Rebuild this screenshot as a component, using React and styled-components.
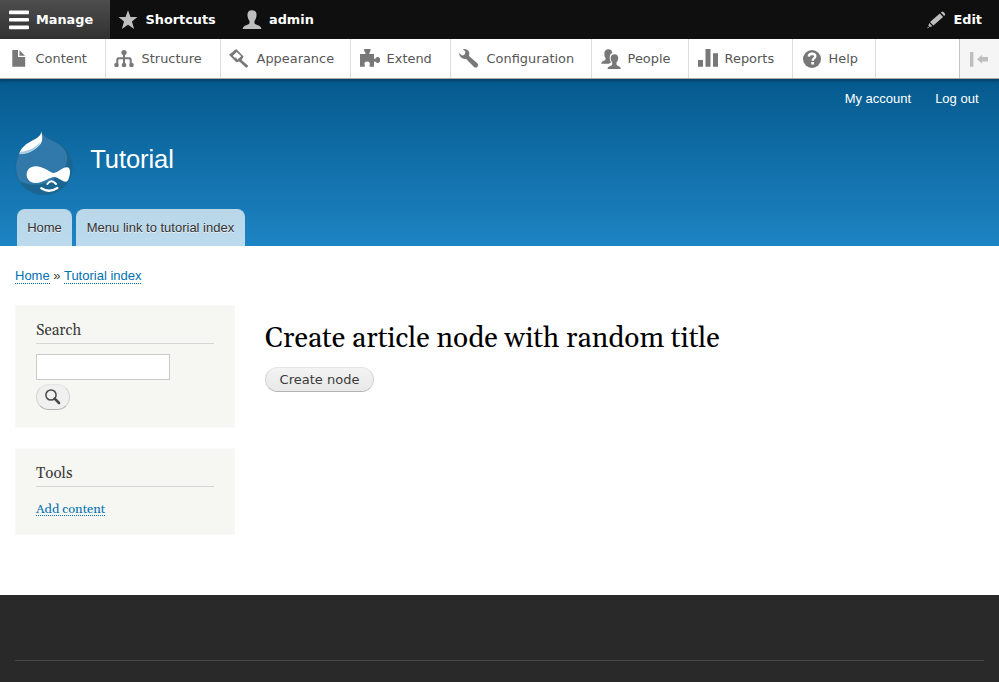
import React from "react";
import styled, { createGlobalStyle, css } from "styled-components";

const sans = css`font-family: "Liberation Sans", Arial, sans-serif;`;
const dejavu = css`font-family: "DejaVu Sans", Verdana, sans-serif;`;
const serif = css`font-family: Georgia, Gelasio, "Liberation Serif", serif;`;

const Global = createGlobalStyle`
  * { box-sizing: border-box; }
  html, body { margin: 0; background: #fff; overflow: hidden; }
  a { text-decoration: none; color: inherit; }
`;

const Page = styled.div`
  ${sans}
  width: 999px;
  height: 682px;
  display: flex;
  flex-direction: column;
  font-size: 13px;
  color: #3b3b3b;
`;

const ToolbarBar = styled.nav`
  ${dejavu}
  display: flex;
  height: 39px;
  flex: none;
  background: #0f0f0f;
  color: #fff;
  font-weight: 700;
  font-size: 12.85px;
`;

const BarItem = styled.a`
  display: flex;
  align-items: center;
  width: ${(p) => p.$width}px;
  padding-left: ${(p) => p.$pad || 9}px;
  gap: ${(p) => p.$gap || 7}px;
  white-space: nowrap;
  ${(p) => p.$active && "background: linear-gradient(#4e4e4e, #303030);"}
  ${(p) => p.$end && "margin-left: auto;"}
`;

const Tray = styled.nav`
  ${dejavu}
  position: relative;
  z-index: 1;
  display: flex;
  flex: none;
  height: 40px;
  background: #fff;
  border-bottom: 1px solid #aaa;
  box-shadow: 0 1px 3px 1px rgba(0, 0, 0, 0.33);
  clip-path: inset(0 0 -8px 0);
  color: #565656;
  font-size: 12.92px;
`;

const TrayItem = styled.a`
  display: flex;
  align-items: center;
  width: ${(p) => p.$width}px;
  padding-left: 8px;
  gap: 7.6px;
  border-right: 1px solid #ddd;
  white-space: nowrap;
`;

const TrayToggle = styled.button`
  margin-left: auto;
  width: 40px;
  padding: 0 0 0 8px;
  display: flex;
  align-items: center;
  border: 0;
  border-left: 1px solid #c4c4c4;
  background: #f5f5f5;
`;

const Glyph = styled.svg`
  width: 20px;
  height: 20px;
  flex: none;
  fill: ${(p) => p.$color || "#787878"};
`;

const Header = styled.header`
  height: 167px;
  flex: none;
  display: flex;
  flex-direction: column;
  background: linear-gradient(#055a8e, #1d84c3);
`;

const AccountMenu = styled.div`
  display: flex;
  justify-content: flex-end;
  gap: 24px;
  height: 46px;
  padding: 12px 20.5px 0 0;
  line-height: 15px;
  color: #fff;
`;

const Branding = styled.div`
  display: flex;
  height: 84px;
  padding-left: 10px;
`;

const Logo = styled.svg`
  width: 70px;
  height: 75px;
`;

const SiteName = styled.a`
  padding: 18px 0 0 10.2px;
  font-size: 25.6px;
  letter-spacing: -0.1px;
  line-height: 32px;
  color: #fff;
`;

const Tabs = styled.nav`
  display: flex;
  gap: 4px;
  padding-left: 17px;
`;

const Tab = styled.a`
  width: ${(p) => p.$width}px;
  height: 37px;
  border-radius: 8px 8px 0 0;
  background: rgba(255, 255, 255, 0.7);
  color: #333;
  text-shadow: 0 1px #eee;
  text-align: center;
  line-height: 38px;
  white-space: nowrap;
`;

const Breadcrumb = styled.div`
  display: flex;
  gap: 3.5px;
  height: 59px;
  padding: 22px 0 0 15px;
  line-height: 15px;
  flex: none;
`;

const DottedLink = styled.a`
  color: #0071b3;
  height: 16px;
  line-height: 15px;
  border-bottom: 1px dotted #0071b3;
`;

const Columns = styled.div`
  display: flex;
  gap: 30px;
  height: 290px;
  padding-left: 15px;
  flex: none;
`;

const Sidebar = styled.aside`
  ${serif}
  width: 220px;
  display: flex;
  flex-direction: column;
  gap: 20px;
`;

const Block = styled.section`
  height: ${(p) => p.$height}px;
  padding: 15px 20px 0;
  border: 1px solid #f9f9f9;
  background: #f6f6f2;
`;

const BlockTitle = styled.h2`
  height: 23px;
  margin: 0 0 10px;
  border-bottom: 1px solid #d6d6d6;
  font-size: 15.1px;
  line-height: 20px;
  font-weight: 400;
`;

const SearchInput = styled.input`
  display: block;
  width: 134px;
  height: 26px;
  border: 1px solid #ccc;
  background: #fff;
`;

const SearchButton = styled.button`
  display: flex;
  align-items: center;
  justify-content: center;
  width: 34px;
  height: 26px;
  margin-top: 4px;
  padding: 0 0 1px 0;
  border: 1px solid #ccc;
  border-color: #e4e4e4 #d2d2d2 #b4b4b4;
  border-radius: 13px;
  background: #f0f0f0;
`;

const ToolLink = styled(DottedLink)`
  display: block;
  width: max-content;
  margin-top: 15px;
  font-size: 12.8px;
  height: 14px;
  line-height: 15px;
`;

const Main = styled.main`
  padding-top: 17px;
`;

const Title = styled.h1`
  ${serif}
  margin: 0;
  height: 45px;
  color: #000;
  font-size: 28px;
  font-weight: 400;
  line-height: 34px;
  white-space: nowrap;
`;

const CreateButton = styled.button`
  ${dejavu}
  display: block;
  width: 109px;
  height: 25px;
  padding: 0;
  border: 1px solid #ccc;
  border-color: #e4e4e4 #d2d2d2 #b4b4b4;
  border-radius: 13px;
  background: linear-gradient(#f3f3f3, #e8e8e8);
  color: #3a3a3a;
  font-size: 13px;
  line-height: 22px;
`;

const Footer = styled.footer`
  flex: 1;
  padding: 65px 15px 0;
  background: #292929;
`;

const FooterRule = styled.div`
  border-top: 1px solid #484848;
`;

const Icon = ({ children, color }) => (
  <Glyph viewBox="0 0 20 20" $color={color}>{children}</Glyph>
);

const icons = {
  content: <path d="M4.3 1H10V8H17.2V17.7H4.3ZM11.5 1.2L17 6.7H11.5Z" />,
  structure: (
    <g>
      <circle cx="10" cy="3.5" r="2.6" />
      <path d="M9 5h2v3.2h4.5q2.2 0 2.2 2.2v4h-2v-3.2q0-1-1-1H11v4.2H9v-4.2H5.3q-1 0-1 1v3.2h-2v-4q0-2.2 2.2-2.2H9Z" />
      <circle cx="2.5" cy="16" r="2.3" />
      <circle cx="10" cy="16" r="2.3" />
      <circle cx="17.5" cy="16" r="2.3" />
    </g>
  ),
  appearance: (
    <path fillRule="evenodd" d="M7.2 0L14.6 7.4L12.6 10.9L19.2 16.7Q19 18.3 17.2 18.7L10.4 12.4L7.3 13.2L0 5.8ZM7.8 2.9L3.8 6.7L6.2 9.2L7 8L8.2 10.7L12.2 7.3Z" />
  ),
  extend: (
    <path d="M1 5H6Q6.8 5 6.6 4L5.2 2V0H11.5V2L10.3 4Q10 5 11 5H15V9.5Q15.4 10.2 16.5 9.5L18 8H19.5L21 9.5V12.5L19.5 14H18L16.5 12.7Q15 12 15 13V17.7H10.8Q9.9 16.8 10.8 15.8Q11.2 12.8 8.3 12.6Q5 12.8 5.5 15.6Q6.5 16.8 5.5 17.7H1Z" />
  ),
  configuration: (
    <path d="M3.8 0Q8.5-.5 10.1 3Q10.7 5 10 7L18.6 14.5Q19.8 16 18.5 17.7Q16.8 19.3 15 17.9L7.2 9.9Q4.2 10.5 1.8 8.3Q-.1 6.5 .2 4L3 6.4Q6 6.5 6.2 3.4L6.3 2.6Z" />
  ),
  people: (
    <g>
      <path d="M8.2 .3Q12.1 .2 12.2 4Q9.2 5 9.8 10Q10 12.3 11.2 13.2L9 14.7H1.2Q1.2 12.7 4.4 11.6Q5.8 11 5.7 9.4Q3.8 6.8 4.4 3.8Q4.9 .3 8.2 .3Z" />
      <path d="M14.4 5.3Q18.7 5.5 18.2 10Q17.7 12.3 16.5 13.6V15.5Q16.8 16.8 18.8 17.2Q20.8 17.9 20.8 20H7.5Q7.5 17.9 9.7 17.2Q11.9 16.8 12.2 15.5V13.6Q10.5 11.7 10.6 8.8Q11 5.3 14.4 5.3Z" />
    </g>
  ),
  reports: <path d="M1 11h5v6.7H1ZM8.5 0h5v17.7h-5ZM16 4.3h5v13.4h-5Z" />,
  help: (
    <g>
      <circle cx="11" cy="10" r="9" />
      <path d="M7.7 7.6Q8 4.8 11.1 4.8Q14.2 4.9 14.3 7.2Q14.3 8.6 12.8 9.6Q11.7 10.4 11.7 11.8" fill="none" stroke="#fff" strokeWidth="2.4" />
      <rect x="10.3" y="13" width="2.7" height="2.5" fill="#fff" />
    </g>
  ),
};

const ShiftedGlyph = styled(Glyph)`
  overflow: visible;
`;

const trayItems = [
  ["Content", "content", 106],
  ["Structure", "structure", 115],
  ["Appearance", "appearance", 130],
  ["Extend", "extend", 100],
  ["Configuration", "configuration", 141],
  ["People", "people", 97],
  ["Reports", "reports", 104],
  ["Help", "help", 83],
];

export default function App() {
  return (
    <Page>
      <Global />
      <ToolbarBar>
        <BarItem $width={110} $active>
          <Icon color="#fff">
            <rect y=".5" width="20" height="3.7" rx="1" />
            <rect y="7.9" width="20" height="3.7" rx="1" />
            <rect y="15.5" width="20" height="3.7" rx="1" />
          </Icon>
          Manage
        </BarItem>
        <BarItem $width={124} $pad={8} $gap={7.5}>
          <Icon color="#bebebe">
            <path d="M10 .2L12.5 6.9H19.4L14 11.5L16.1 18.9L10 14.8L3.9 18.9L6 11.5L.6 6.9H7.5Z" />
          </Icon>
          Shortcuts
        </BarItem>
        <BarItem $width={100} $pad={8}>
          <Icon color="#bebebe">
            <path d="M10 .3C13.8 .3 15 3 14.4 6.4Q13.9 9.4 12.5 11V13.2Q12.8 14.4 15.8 15.2Q19.2 16.2 19.3 19H.7Q.8 16.2 4.2 15.2Q7.2 14.4 7.5 13.2V11Q6.1 9.4 5.6 6.4C5 3 6.2 .3 10 .3Z" />
          </Icon>
          admin
        </BarItem>
        <BarItem $width={73} $pad={1} $gap={6.5} $end>
          <Icon color="#bebebe">
            <path d="M13.8 2.6L15.5 1.4Q17.9 2.3 18.3 4.8L17.1 6ZM12.8 3.5L16.1 6.9L6.4 15.6L3 12.1ZM2.2 13L5.4 16.2L2.8 17.1L1.4 15.7ZM1 16.5L2 17.6L.3 18.4Z" />
          </Icon>
          Edit
        </BarItem>
      </ToolbarBar>

      <Tray>
        {trayItems.map(([label, icon, width]) => (
          <TrayItem key={label} $width={width}>
            <ShiftedGlyph viewBox="0 0 20 20">{icons[icon]}</ShiftedGlyph>
            {label}
          </TrayItem>
        ))}
        <TrayToggle aria-label="Vertical orientation">
          <Icon color="#bebebe">
            <path d="M2 3H5.4V17.7H2ZM9 10.2L14.1 5.8V8H20V12.4H14.1V14.7Z" />
          </Icon>
        </TrayToggle>
      </Tray>

      <Header>
        <AccountMenu>
          <a>My account</a>
          <a>Log out</a>
        </AccountMenu>
        <Branding>
          <Logo viewBox="0 0 210 225">
            <path d="M94 19C99 33 115 40 137 51C169 67 186 95 186 128C185 174 150 209 102 209C52 209 17 173 17 126C17 92 36 65 60 51C80 40 94 34 94 19Z" fill="#3079aa" stroke="#1d628e" strokeWidth="2" />
            <path d="M141 54C194 82 201 145 163 185C120 223 55 214 29 169C52 179 78 182 100 176C145 166 178 126 170 88Q164 68 141 54Z" fill="#1b6591" />
            <path d="M94 18C94 32 82 39 66 47C48 56 33 68 28 86C58 86 88 70 96 48Q98 37 94 18Z" fill="#fff" />
            <path d="M28 88L30 81Q66 79 92 51Q88 62 80 68Q58 88 28 88Z" fill="#a9cce3" />
            <path d="M78 124C97 124 110 136 127 143C142 148 151 128 171 127C182 128 182 144 177 158C170 184 154 161 135 156C121 154 102 173 77 174C43 175 39 124 78 124Z" fill="#fff" />
            <path d="M112 177Q124 161 138 177" fill="none" stroke="#fff" strokeWidth="6" strokeLinecap="round" />
            <path d="M94 190Q118 205 142 189" fill="none" stroke="#fff" strokeWidth="7" strokeLinecap="round" />
          </Logo>
          <SiteName>Tutorial</SiteName>
        </Branding>
        <Tabs>
          <Tab $width={55}>Home</Tab>
          <Tab $width={169}>Menu link to tutorial index</Tab>
        </Tabs>
      </Header>

      <Breadcrumb>
        <DottedLink>Home</DottedLink>
        <span>»</span>
        <DottedLink>Tutorial index</DottedLink>
      </Breadcrumb>

      <Columns>
        <Sidebar>
          <Block $height={123}>
            <BlockTitle>Search</BlockTitle>
            <SearchInput aria-label="Search" />
            <SearchButton aria-label="Submit search">
              <svg width="18" height="18" viewBox="0 0 18 18" fill="none" stroke="#484848">
                <circle cx="7" cy="7" r="5.1" strokeWidth="1.5" />
                <path d="M10.7 10.6L15 15" strokeWidth="2.6" strokeLinecap="round" />
              </svg>
            </SearchButton>
          </Block>
          <Block $height={87}>
            <BlockTitle>Tools</BlockTitle>
            <ToolLink>Add content</ToolLink>
          </Block>
        </Sidebar>
        <Main>
          <Title>Create article node with random title</Title>
          <CreateButton>Create node</CreateButton>
        </Main>
      </Columns>

      <Footer>
        <FooterRule />
      </Footer>
    </Page>
  );
}
